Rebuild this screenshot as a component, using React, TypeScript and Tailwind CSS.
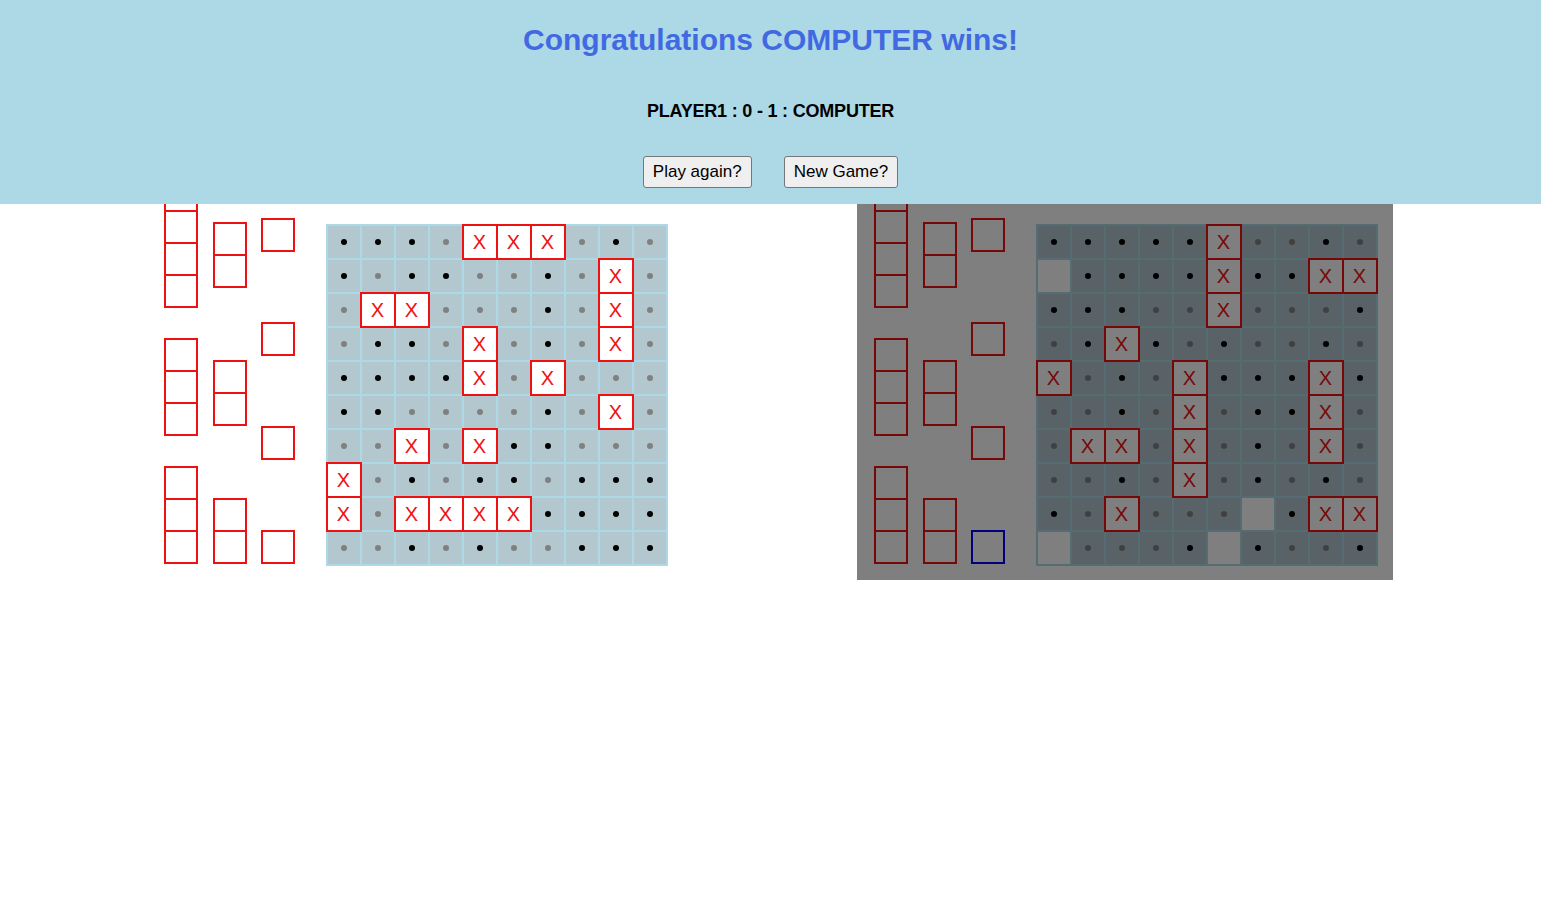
import React from 'react';

// b = black dot, g = grey dot, X = hit, W = plain white cell
const PLAYER_BOARD = [
  'bbbgXXXgbg',
  'bgbbggbgXg',
  'gXXgggbgXg',
  'gbbgXgbgXg',
  'bbbbXgXggg',
  'bbggggbgXg',
  'ggXgXbbggg',
  'Xgbgbbgbbb',
  'XgXXXXbbbb',
  'ggbgbggbbb',
];

const COMPUTER_BOARD = [
  'bbbbbXggbg',
  'WbbbbXbbXX',
  'bbbggXgggb',
  'gbXbgbggbg',
  'XgbgXbbbXb',
  'ggbgXgbbXg',
  'gXXgXgbgXg',
  'ggbgXgbgbg',
  'bgXgggWbXX',
  'WgggbWbggb',
];

function Cell({ kind }: { kind: string }) {
  if (kind === 'X') {
    return (
      <div className="relative z-10 w-[36px] h-[36px] border-2 border-[#ee1111] bg-white flex items-center justify-center text-[20px] leading-none text-[#ee1111] font-['Liberation_Sans',sans-serif]">
        X
      </div>
    );
  }
  if (kind === 'W') {
    return <div className="w-[36px] h-[36px] border-2 border-[#add8e6] bg-white" />;
  }
  return (
    <div className="w-[36px] h-[36px] border-2 border-[#add8e6] bg-[#b3c7cf] flex items-center justify-center">
      <span className={`block w-[6px] h-[6px] rounded-full ${kind === 'b' ? 'bg-black' : 'bg-[#808080]'}`} />
    </div>
  );
}

function Board({ rows }: { rows: string[] }) {
  return (
    <div className="w-[342px] h-[342px]">
      <div className="grid grid-cols-[repeat(10,34px)] grid-rows-[repeat(10,34px)]">
        {rows.flatMap((row, r) =>
          row.split('').map((k, c) => <Cell key={`${r}-${c}`} kind={k} />)
        )}
      </div>
    </div>
  );
}

function Ship({ size, blue }: { size: number; blue?: boolean }) {
  return (
    <div className="flex flex-col">
      {Array.from({ length: size }).map((_, i) => (
        <div
          key={i}
          className={`w-[34px] h-[34px] border-2 ${blue ? 'border-[#0000ff]' : 'border-[#ee1111]'} ${i > 0 ? '-mt-[2px]' : ''}`}
        />
      ))}
    </div>
  );
}

function Fleet({ lastBlue }: { lastBlue?: boolean }) {
  return (
    <div className="flex items-end gap-[14px] mb-[2px]">
      <div className="flex flex-col gap-[30px]">
        <Ship size={4} />
        <Ship size={3} />
        <Ship size={3} />
      </div>
      <div className="flex flex-col gap-[72px] ml-px">
        <Ship size={2} />
        <Ship size={2} />
        <Ship size={2} />
      </div>
      <div className="flex flex-col gap-[70px]">
        <Ship size={1} />
        <Ship size={1} />
        <Ship size={1} />
        <Ship size={1} blue={lastBlue} />
      </div>
    </div>
  );
}

function Panel({ rows, disabled }: { rows: string[]; disabled?: boolean }) {
  return (
    <div className="relative flex items-end w-[536px] pl-[17px] pr-[16px] pt-[17px] pb-[14px]">
      <Fleet lastBlue={disabled} />
      <div className="ml-[31px]">
        <Board rows={rows} />
      </div>
      {disabled && <div className="absolute inset-0 z-20 bg-black/50" />}
    </div>
  );
}

export default function App() {
  return (
    <div className="min-h-screen bg-white font-['Liberation_Sans',sans-serif]">
      <div className="fixed top-0 inset-x-0 z-30 h-[204px] bg-[#add8e6] flex flex-col items-center">
        <h1 className="mt-[21px] text-[30px] leading-[38px] font-bold text-[#4169e1]">
          Congratulations COMPUTER wins!
        </h1>
        <p className="mt-[41px] text-[18px] leading-[22px] font-bold text-black tracking-[-0.2px]">
          PLAYER1 : 0 - 1 : COMPUTER
        </p>
        <div className="mt-[34px] flex gap-[32px]">
          <button className="h-[32px] px-[9px] text-[17px] text-black bg-[#efefef] border border-[#767676] rounded-[3px]">
            Play again?
          </button>
          <button className="h-[32px] px-[9px] text-[17px] text-black bg-[#efefef] border border-[#767676] rounded-[3px]">
            New Game?
          </button>
        </div>
      </div>

      <div className="pt-[161px] pr-[2px] flex justify-center gap-[174px]">
        <Panel rows={PLAYER_BOARD} />
        <Panel rows={COMPUTER_BOARD} disabled />
      </div>
    </div>
  );
}
